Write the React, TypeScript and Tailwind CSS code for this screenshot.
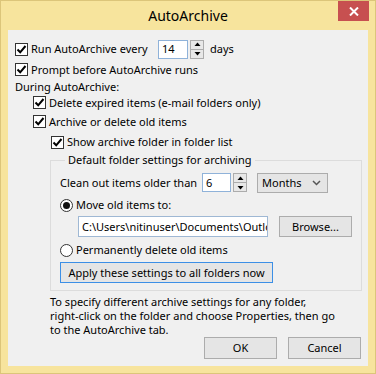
import React from 'react';

const font = { fontFamily: '"Noto Sans", "Open Sans", sans-serif' };

const Check: React.FC<{ checked?: boolean }> = ({ checked }) => (
  <span className="flex h-[13px] w-[13px] shrink-0 items-center justify-center border border-[#333333] bg-white">
    {checked && (
      <svg width="11" height="11" viewBox="0 0 11 11">
        <path d="M1.5 5.5 L4.2 8.3 L9.5 2" fill="none" stroke="#000" strokeWidth="2" />
      </svg>
    )}
  </span>
);

const Radio: React.FC<{ checked?: boolean }> = ({ checked }) => (
  <span className="flex h-[13px] w-[13px] shrink-0 items-center justify-center rounded-full border border-[#333333] bg-white">
    {checked && <span className="h-[7px] w-[7px] rounded-full bg-[#111111]" />}
  </span>
);

const CheckRow: React.FC<{ label: string; className: string; checked?: boolean }> = ({ label, className, checked = true }) => (
  <div className={`flex items-center gap-[3px] whitespace-nowrap ${className}`}>
    <Check checked={checked} />
    <span>{label}</span>
  </div>
);

const Spinner: React.FC = () => (
  <div className="flex h-[19px] w-[14px] flex-col border border-[#acacac] bg-[#e8e8e8]">
    <div className="flex flex-1 items-center justify-center border-b border-[#acacac]">
      <svg width="7" height="5" viewBox="0 0 7 5">
        <path d="M3.5 0.5 L6.5 4 L0.5 4 Z" fill="#000" />
      </svg>
    </div>
    <div className="flex flex-1 items-center justify-center">
      <svg width="7" height="5" viewBox="0 0 7 5">
        <path d="M0.5 1 L6.5 1 L3.5 4.5 Z" fill="#000" />
      </svg>
    </div>
  </div>
);

const NumBox: React.FC<{ value: string; width: string }> = ({ value, width }) => (
  <div className={`flex h-[19px] ${width} shrink-0 items-center border border-[#8fb2d9] bg-white pl-[3px]`}>{value}</div>
);

const Btn: React.FC<{ label: string; className: string }> = ({ label, className }) => (
  <div className={`flex shrink-0 items-center justify-center whitespace-nowrap border bg-[#e5e5e5] ${className}`}>{label}</div>
);

export default function App() {
  return (
    <div
      className="flex h-[374px] w-[376px] flex-col border border-[#dcc57a] bg-[#f7e49d] text-[11px] text-black"
      style={font}
    >
      <div className="relative flex h-[29px] shrink-0 items-center justify-center">
        <span className="text-[14px] leading-none">AutoArchive</span>
        <div className="absolute right-[6px] top-0 flex h-[20px] w-[31px] items-center justify-center bg-[#c75050]">
          <svg width="10" height="9" viewBox="0 0 10 9">
            <path d="M1 0.5 L9 8.5 M9 0.5 L1 8.5" stroke="#fff" strokeWidth="2" />
          </svg>
        </div>
      </div>

      <div className="mx-[7px] flex h-[336px] flex-col bg-[#f0f0f0] pl-[7px] pt-[9px] leading-[16px]">
        <div className="flex h-[20px] items-center whitespace-nowrap">
          <Check checked />
          <span className="ml-[3px] w-[127px] shrink-0">Run AutoArchive every</span>
          <NumBox value="14" width="w-[30px]" />
          <div className="ml-[2px]">
            <Spinner />
          </div>
          <span className="ml-[6px]">days</span>
        </div>
        <CheckRow label="Prompt before AutoArchive runs" className="h-[21px]" />
        <div className="flex h-[14px] items-center">During AutoArchive:</div>
        <CheckRow label="Delete expired items (e-mail folders only)" className="ml-[18px] h-[17px]" />
        <CheckRow label="Archive or delete old items" className="ml-[18px] h-[21px]" />
        <CheckRow label="Show archive folder in folder list" className="ml-[36px] h-[20px]" />

        <fieldset className="ml-[35px] w-[312px] border border-[#dcdcdc] pb-[7px] pl-[9px]">
          <legend className="ml-[5px] whitespace-nowrap px-[3px] leading-[16px]">Default folder settings for archiving</legend>
          <div className="mt-[5px] flex h-[19px] items-center whitespace-nowrap">
            <span className="w-[142px] shrink-0">Clean out items older than</span>
            <NumBox value="6" width="w-[29px]" />
            <div className="ml-[2px]">
              <Spinner />
            </div>
            <div className="ml-[10px] flex h-[20px] w-[71px] shrink-0 items-center justify-between border border-[#acacac] bg-[#e5e5e5] pl-[4px] pr-[6px]">
              <span>Months</span>
              <svg width="9" height="6" viewBox="0 0 9 6">
                <path d="M1 1 L4.5 4.5 L8 1" fill="none" stroke="#555" strokeWidth="1.5" />
              </svg>
            </div>
          </div>
          <div className="mt-[3px] flex h-[20px] items-center gap-[3px] whitespace-nowrap">
            <Radio checked />
            <span>Move old items to:</span>
          </div>
          <div className="mt-[1px] flex items-center">
            <input
              readOnly
              value="C:\Users\nitinuser\Documents\Outlook Files\archive.pst"
              className="ml-[18px] h-[21px] w-[190px] shrink-0 border border-[#9fb8d4] bg-white pl-[3px] text-[11px] text-black outline-none"
              style={font}
            />
            <Btn label="Browse..." className="ml-[11px] h-[21px] w-[73px] border-[#acacac]" />
          </div>
          <div className="mt-[3px] flex h-[20px] items-center gap-[3px] whitespace-nowrap">
            <Radio />
            <span>Permanently delete old items</span>
          </div>
          <Btn label="Apply these settings to all folders now" className="mt-[2px] h-[21px] w-[213px] border-[#3c8fe6]" />
        </fieldset>

        <div className="ml-[35px] mt-[4px] flex flex-col whitespace-nowrap leading-[14px]">
          <span>To specify different archive settings for any folder,</span>
          <span>right-click on the folder and choose Properties, then go</span>
          <span>to the AutoArchive tab.</span>
        </div>
        <div className="flex justify-end gap-[11px] pr-[7px]">
          <Btn label="OK" className="h-[22px] w-[73px] border-[#acacac]" />
          <Btn label="Cancel" className="h-[22px] w-[73px] border-[#acacac]" />
        </div>
      </div>
    </div>
  );
}
